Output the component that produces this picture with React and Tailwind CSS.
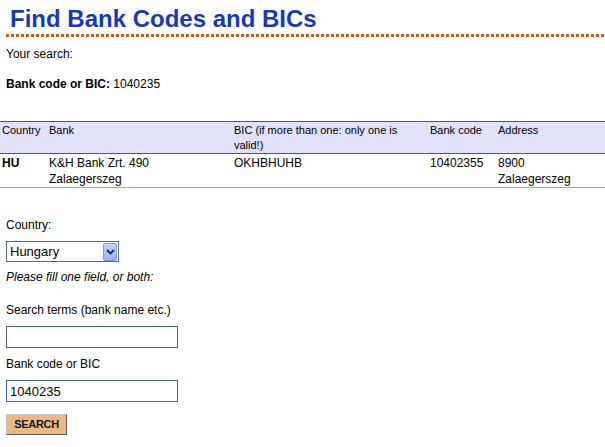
import React from 'react';

const font = "font-['Liberation_Sans',Arial,sans-serif]";

const Chevron = () => (
  <svg width="9" height="6" viewBox="0 0 9 6">
    <path d="M1 1 L4.5 4.5 L8 1" fill="none" stroke="#1b2a55" strokeWidth="1.8" />
  </svg>
);

const App = () => {
  return (
    <div className={`${font} w-[605px] h-[447px] bg-white text-black overflow-hidden`}>
      <h1 className="pl-[10px] pt-[4px] text-[24px] leading-[30px] font-bold text-[#1a39b0]">
        Find Bank Codes and BICs
      </h1>
      <div className="ml-[6px] h-[3px] bg-[linear-gradient(to_right,#d35a0f_3px,transparent_3px)] bg-[length:5px_3px] bg-repeat-x" />

      <p className="mt-[10px] pl-[6px] text-[12px] leading-[14px]">Your search:</p>
      <p className="mt-[16px] pl-[6px] text-[12px] leading-[14px]">
        <span className="font-bold">Bank code or BIC:</span> 1040235
      </p>

      {/* results */}
      <div className="mt-[30px]">
        <div className="grid grid-cols-[47px_185px_196px_68px_1fr] border-y border-[#2a4fe0] bg-[#e1e1fa] text-[11px] leading-[15px] pt-[1px]">
          <div className="px-[2px]">Country</div>
          <div className="px-[2px]">Bank</div>
          <div className="px-[2px]">
            BIC (if more than one: only one is
            <br />
            valid!)
          </div>
          <div className="px-[2px]">Bank code</div>
          <div className="px-[2px]">Address</div>
        </div>
        <div className="grid grid-cols-[47px_185px_196px_68px_1fr] border-b border-[#a6a6a6] text-[12px] leading-[16px] pt-[1px]">
          <div className="px-[2px] font-bold">HU</div>
          <div className="px-[2px]">
            K&amp;H Bank Zrt. 490
            <br />
            Zalaegerszeg
          </div>
          <div className="px-[2px]">OKHBHUHB</div>
          <div className="px-[2px]">10402355</div>
          <div className="px-[2px]">
            8900
            <br />
            Zalaegerszeg
          </div>
        </div>
      </div>

      {/* search form */}
      <div className="pl-[6px] flex flex-col items-start text-[12px] leading-[14px]">
        <p className="mt-[30px]">Country:</p>
        <div className="mt-[9px] w-[113px] h-[21px] border border-[#4d6a93] flex items-center justify-between pl-[3px] pr-px text-[13px]">
          <span>Hungary</span>
          <span className="w-[14px] h-[18px] flex items-center justify-center rounded-[2px] border border-[#7f9de3] bg-[linear-gradient(to_bottom,#c4d4fb,#98b2f2)]">
            <Chevron />
          </span>
        </div>
        <p className="mt-[8px] italic">Please fill one field, or both:</p>
        <p className="mt-[19px]">Search terms (bank name etc.)</p>
        <input
          className="mt-[9px] w-[172px] h-[22px] border border-[#45648e] px-[3px] text-[13px] outline-none"
          defaultValue=""
        />
        <p className="mt-[9px]">Bank code or BIC</p>
        <input
          className="mt-[9px] w-[172px] h-[22px] border border-[#45648e] px-[3px] text-[13px] outline-none"
          defaultValue="1040235"
        />
        <button className="mt-[12px] w-[61px] h-[21px] bg-[#e8b989] border border-t-[#c8c8c8] border-l-[#c8c8c8] border-r-[#5a5a5a] border-b-[#5a5a5a] text-[11px] tracking-[-0.3px] font-bold text-[#1a1a1a] leading-none">
          SEARCH
        </button>
      </div>
    </div>
  );
};

export default App;
